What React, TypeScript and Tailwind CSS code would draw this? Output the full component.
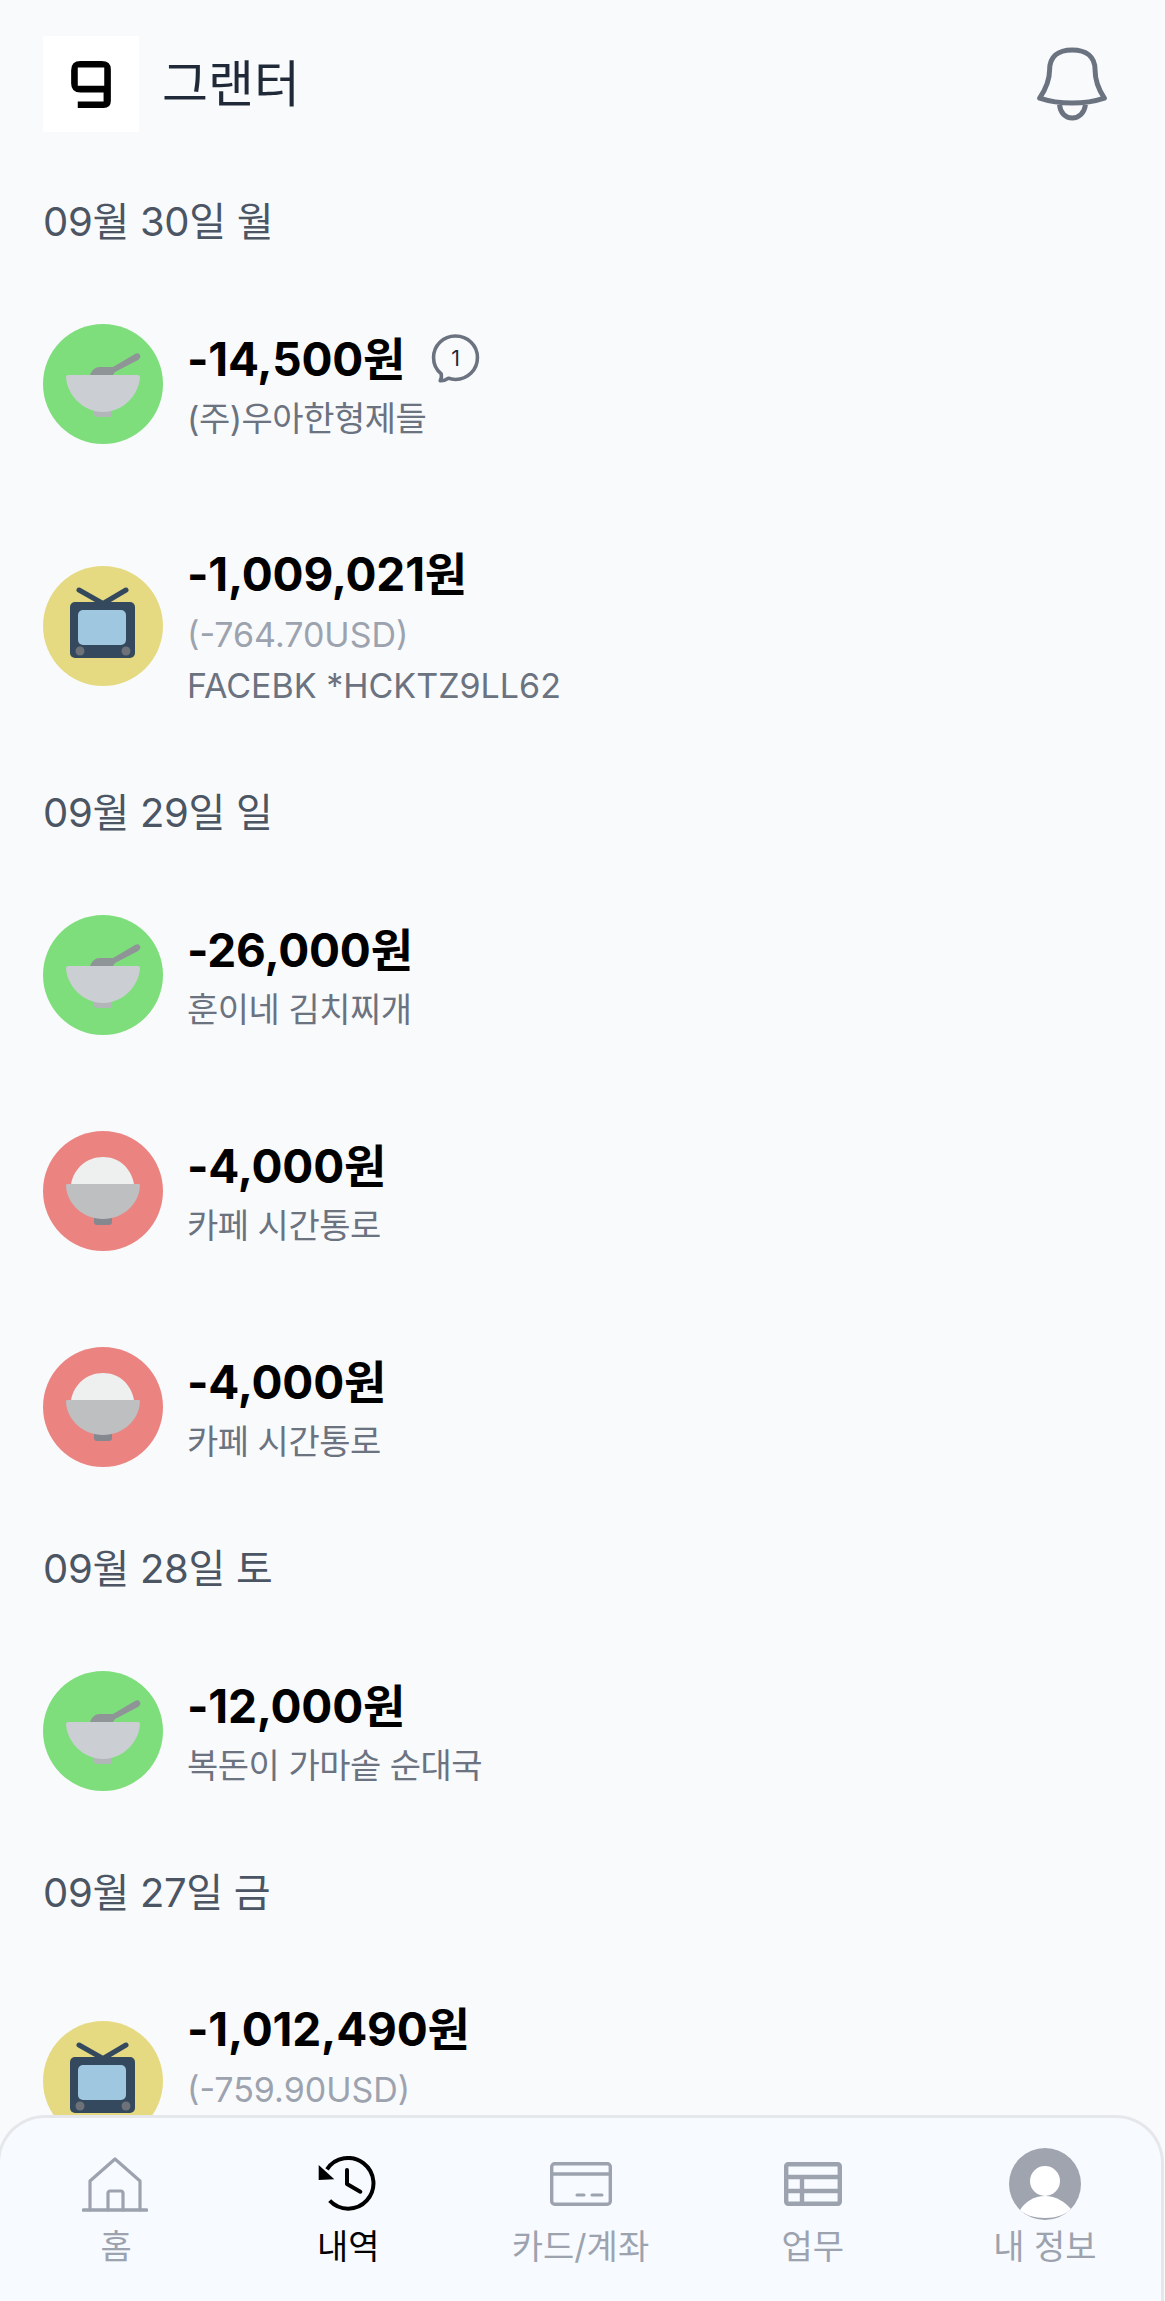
import React from "react";

function BowlIcon() {
  return (
    <div className="w-[120px] h-[120px] rounded-full bg-[#7ede7c] shrink-0">
      <svg viewBox="0 0 120 120" className="w-full h-full">
        <path d="M47 51c2-5 5-8 10-8h8c2 0 4 0 5 0L92 30c2-1 4-1 5 1 1 2 0 3-2 5L72 48l-2 3z" fill="#8f9497" />
        <path d="M51 84h18v6c0 2-1 3-3 3H54c-2 0-3-1-3-3z" fill="#b3b6b9" />
        <path d="M25 51h70c1 0 2 1 2 2-1 18-17 35-37 35S24 71 23 53c0-1 1-2 2-2z" fill="#cbced3" />
      </svg>
    </div>
  );
}

function RiceIcon() {
  return (
    <div className="w-[120px] h-[120px] rounded-full bg-[#eb8381] shrink-0">
      <svg viewBox="0 0 120 120" className="w-full h-full">
        <path d="M28 53c3-16 16-27 32-27s28 11 31 27z" fill="#edf0ef" />
        <path d="M51 86h18v5c0 2-1 3-3 3H54c-2 0-3-1-3-3z" fill="#85888f" />
        <path d="M25 53h70c1 0 2 0 2 2-1 18-17 33-37 33S24 73 23 55c0-2 1-2 2-2z" fill="#bdbfc1" />
      </svg>
    </div>
  );
}

function TvIcon() {
  return (
    <div className="w-[120px] h-[120px] rounded-full bg-[#e5da81] shrink-0">
      <svg viewBox="0 0 120 120" className="w-full h-full">
        <path d="M59 37L36 24M61 37l22-13" stroke="#34495e" strokeWidth="5" strokeLinecap="round" fill="none" />
        <rect x="27" y="36" width="65" height="56" rx="5" fill="#34495e" />
        <rect x="35" y="44" width="48" height="35" rx="5" fill="#9fc7e0" />
        <circle cx="37" cy="85" r="4.5" fill="#6d7278" />
        <circle cx="83" cy="85" r="4.5" fill="#6d7278" />
      </svg>
    </div>
  );
}

function Row({ icon, amount, name, usd, comment }: { icon: React.ReactNode; amount: string; name: string; usd?: string; comment?: boolean }) {
  return (
    <div className="flex items-center gap-6 py-12">
      {icon}
      <div className="flex flex-col">
        <div className="flex items-center gap-[26px] h-[68px]">
          <span className="text-[46px] font-bold text-black leading-[68px] tracking-[-0.2px]">{amount}</span>
          {comment && (
            <svg viewBox="0 0 48 48" className="w-[49px] h-[49px]" fill="none">
              <path d="M10 39C5 35 2.5 29 2.5 23 2.5 11 12 2 24 2s21.5 9 21.5 21S36 44.5 24 44.5c-2.5 0-5-.4-7-1.2-2.5 1.7-6 2.7-8 2.5 1.2-1.8 1.5-4 1-6.8z" stroke="#6b7280" strokeWidth="3.5" strokeLinejoin="round" />
              <text x="24" y="31" textAnchor="middle" fontSize="21" fill="#1f2937" fontFamily="Inter">1</text>
            </svg>
          )}
        </div>
        {usd && <span className="mt-px text-[34px] leading-[51px] text-[#9ca3af]">{usd}</span>}
        <span className={`text-[34px] leading-[51px] text-[#6b7280] ${usd ? "" : "tracking-[-0.5px]"}`}>{name}</span>
      </div>
    </div>
  );
}

function DateRow({ children }: { children: string }) {
  return <div className="h-[108px] flex items-center text-[40px] tracking-[-0.3px] text-[#4b5563]">{children}</div>;
}

function NavItem({ icon, label, active }: { icon: React.ReactNode; label: string; active?: boolean }) {
  return (
    <div className={`flex-1 flex flex-col items-center ${active ? "text-black" : "text-[#9ca3af]"}`}>
      <div className="h-[72px] flex items-center justify-center">{icon}</div>
      <span className="mt-[5px] text-[34px] leading-[44px]">{label}</span>
    </div>
  );
}

export default function App() {
  return (
    <div className="relative w-[1165px] h-[2301px] overflow-hidden bg-[#f9fafc] font-['Inter','Noto_Sans_CJK_KR',sans-serif]">
      <div className="px-[43px]">
        <header className="h-[168px] flex items-start pt-9">
          <div className="w-[96px] h-[96px] bg-white flex items-center justify-center">
            <svg viewBox="0 0 120 142" className="w-[40px] h-[47px]">
              <path
                fillRule="evenodd"
                d="M28 0H92Q120 0 120 25V120Q120 142 98 142H20V122H98V95H28Q0 95 0 68V28Q0 0 28 0ZM20 20V75H100V20Z"
                fill="#000"
              />
            </svg>
          </div>
          <span className="ml-[23px] h-[96px] flex items-center text-[50px] text-[#1f2937]">그랜터</span>
          <svg viewBox="100 70 235 245" className="ml-auto mt-[7px] mr-[11px] w-[78px] h-[82px]" fill="none" stroke="#6b7280" strokeWidth="15" strokeLinejoin="round">
            <path d="M120 235C140 205 150 180 150 150 150 110 175 90 218 90 260 90 287 110 287 150 287 180 295 205 315 235 285 245 250 250 218 250 185 250 150 245 120 235Z" />
            <path d="M180 255C182 280 198 295 218 295 238 295 255 280 258 255" />
          </svg>
        </header>
        <DateRow>09월 30일 월</DateRow>
        <Row icon={<BowlIcon />} amount="-14,500원" comment name="(주)우아한형제들" />
        <Row icon={<TvIcon />} amount="-1,009,021원" usd="(-764.70USD)" name="FACEBK *HCKTZ9LL62" />
        <DateRow>09월 29일 일</DateRow>
        <Row icon={<BowlIcon />} amount="-26,000원" name="훈이네 김치찌개" />
        <Row icon={<RiceIcon />} amount="-4,000원" name="카페 시간통로" />
        <Row icon={<RiceIcon />} amount="-4,000원" name="카페 시간통로" />
        <DateRow>09월 28일 토</DateRow>
        <Row icon={<BowlIcon />} amount="-12,000원" name="복돈이 가마솥 순대국" />
        <DateRow>09월 27일 금</DateRow>
        <Row icon={<TvIcon />} amount="-1,012,490원" usd="(-759.90USD)" name="FACEBK *HCKTZ9LL62" />
      </div>
      <nav className="absolute left-[-3px] bottom-0 w-[1167px] h-[186px] bg-[#f7faff] border-t-[3px] border-x-[3px] border-[#e5e7eb] rounded-t-[48px] flex items-start pt-[30px]">
        <NavItem label="홈" icon={
          <svg viewBox="0 0 66 55" className="mr-[2px] w-[66px] h-[55px]" fill="none" stroke="#9ca3af" strokeWidth="3.2" strokeLinejoin="round" strokeLinecap="round">
            <path d="M8 53V24L33 2l25 22v29" />
            <path d="M26 53V36c0-1 1-2 2-2h11c1 0 2 1 2 2v17" />
            <path d="M1.5 53h63" strokeWidth="3.6" />
          </svg>
        } />
        <NavItem active label="내역" icon={
          <svg viewBox="770 78 177 168" className="mr-[4px] w-[59px] h-[56px]" fill="none" stroke="#000" strokeWidth="12">
            <path d="M808 212A76 76 0 1 0 800 118" />
            <path d="M860 120V162L900 185" strokeLinecap="round" strokeLinejoin="round" />
            <path d="M775 105L822 148 775 150Z" fill="#000" stroke="none" />
          </svg>
        } />
        <NavItem label="카드/계좌" icon={
          <svg viewBox="0 0 62 44" className="w-[62px] h-[44px]" fill="none" stroke="#9ca3af" strokeWidth="3.4">
            <rect x="1.7" y="1.7" width="58.6" height="40.6" rx="3" />
            <path d="M2 12h58" />
            <path d="M27 33h7M42 33h10" strokeWidth="3" strokeLinecap="round" />
          </svg>
        } />
        <NavItem label="업무" icon={
          <svg viewBox="0 0 58 44" className="w-[58px] h-[44px]" fill="none" stroke="#9ca3af" strokeWidth="4.4">
            <rect x="2.2" y="2.2" width="53.6" height="39.6" rx="2" />
            <path d="M2 15h54M2 29h54M18 15v27" />
          </svg>
        } />
        <NavItem label="내 정보" icon={
          <svg viewBox="0 0 72 72" className="w-[72px] h-[72px]">
            <circle cx="36" cy="36" r="36" fill="#9fa4af" />
            <circle cx="36" cy="33" r="15" fill="#fff" />
            <path d="M11 62c5-8 14-14 25-14s20 6 26 13c-6 6-15 9-26 9s-20-3-25-8z" fill="#fff" />
          </svg>
        } />
      </nav>
    </div>
  );
}
